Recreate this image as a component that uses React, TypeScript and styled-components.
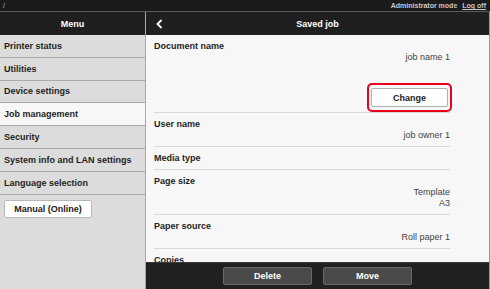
import * as React from 'react'
import styled, { createGlobalStyle } from 'styled-components'

const GlobalStyle = createGlobalStyle`
  html, body {
    margin: 0;
    padding: 0;
    overflow: hidden;
    background: #f7f7f7;
  }
  body {
    font-family: 'Liberation Sans', Arial, sans-serif;
  }
`

const Page = styled.div`
  width: 490px;
  height: 289px;
  display: flex;
  flex-direction: column;
  overflow: hidden;
`

const TopBar = styled.div`
  height: 11px;
  flex: 0 0 11px;
  background: #1b1b1b;
  border-bottom: 1px solid #5a5a5a;
  display: flex;
  align-items: center;
  justify-content: space-between;
  padding: 0 4px 0 3px;
  font-size: 7px;
  font-weight: bold;
  color: #c8c8c8;
`

const Slash = styled.span`
  font-weight: normal;
  color: #bbb;
`

const TopLinks = styled.div`
  display: flex;
  gap: 5px;
`

const LogOff = styled.span`
  text-decoration: underline;
`

const Main = styled.div`
  flex: 1;
  display: flex;
  min-height: 0;
`

const Sidebar = styled.div`
  width: 145px;
  flex: 0 0 145px;
  background: #dcdcdc;
  border-right: 1px solid #a8a8a8;
  display: flex;
  flex-direction: column;
`

const BarHeader = styled.div`
  height: 23px;
  flex: 0 0 23px;
  background: #1f1f1f;
  color: #fff;
  font-size: 9px;
  font-weight: bold;
  display: flex;
  align-items: center;
  justify-content: center;
`

const MenuItem = styled.div<{ $active?: boolean }>`
  height: 21.8px;
  border-bottom: 1px solid #a9a9a9;
  background: ${p => (p.$active ? '#f7f7f7' : '#dcdcdc')};
  display: flex;
  align-items: center;
  padding-left: 4px;
  font-size: 9px;
  font-weight: bold;
  color: #1e1e1e;
`

const ManualButton = styled.div`
  margin: 5px 0 0 4px;
  width: 86px;
  height: 16px;
  background: #fff;
  border: 1px solid #b8b8b8;
  border-radius: 2px;
  display: flex;
  align-items: center;
  justify-content: center;
  font-size: 9px;
  font-weight: bold;
  color: #222;
`

const Pane = styled.div`
  flex: 1;
  display: flex;
  flex-direction: column;
  min-width: 0;
  border-right: 1px solid #9a9a9a;
`

const PaneHeader = styled(BarHeader)`
  display: grid;
  grid-template-columns: 1fr auto 1fr;
  padding: 0 10px;
`

const Back = styled.div`
  display: flex;
  align-items: center;
`

const Content = styled.div`
  flex: 1;
  overflow: hidden;
  background: #f7f7f7;
  padding: 0 39px 0 8px;
`

const Field = styled.div`
  padding: 5px 0 5px;
  border-bottom: 1px solid #d9d9d9;
  display: flex;
  flex-direction: column;
`

const Label = styled.div`
  font-size: 9px;
  line-height: 12px;
  font-weight: bold;
  color: #1e1e1e;
`

const Value = styled.div`
  font-size: 9px;
  line-height: 11px;
  color: #444;
  text-align: right;
`

const ChangeRow = styled.div`
  display: flex;
  justify-content: flex-end;
  margin: 20px -2px -5px 0;
`

const Highlight = styled.div`
  border: 2px solid #e8001c;
  border-radius: 5px;
  padding: 3px 2px 3px 2px;
`

const ChangeButton = styled.div`
  width: 75px;
  height: 17px;
  background: #fff;
  border: 1px solid #b0b0b0;
  border-radius: 2px;
  display: flex;
  align-items: center;
  justify-content: center;
  font-size: 9px;
  font-weight: bold;
  color: #222;
`

const BottomBar = styled.div`
  height: 26px;
  flex: 0 0 26px;
  background: #202020;
  border-top: 1px solid #3a3a3a;
  display: flex;
  align-items: center;
  justify-content: center;
  gap: 11px;
`

const DarkButton = styled.div`
  width: 87px;
  height: 16px;
  background: #4a4a4a;
  border: 1px solid #6a6a6a;
  border-radius: 2px;
  display: flex;
  align-items: center;
  justify-content: center;
  font-size: 9px;
  font-weight: bold;
  color: #fff;
`

const menu = [
  'Printer status',
  'Utilities',
  'Device settings',
  'Job management',
  'Security',
  'System info and LAN settings',
  'Language selection',
]

const fields: { label: string; values: string[] }[] = [
  { label: 'User name', values: ['job owner 1'] },
  { label: 'Media type', values: [] },
  { label: 'Page size', values: ['Template', 'A3'] },
  { label: 'Paper source', values: ['Roll paper 1'] },
  { label: 'Copies', values: [] },
]

export default function App() {
  return (
    <Page>
      <GlobalStyle />
      <TopBar>
        <Slash>/</Slash>
        <TopLinks>
          <span>Administrator mode</span>
          <LogOff>Log off</LogOff>
        </TopLinks>
      </TopBar>
      <Main>
        <Sidebar>
          <BarHeader>Menu</BarHeader>
          {menu.map(m => (
            <MenuItem key={m} $active={m === 'Job management'}>{m}</MenuItem>
          ))}
          <ManualButton>Manual (Online)</ManualButton>
        </Sidebar>
        <Pane>
          <PaneHeader>
            <Back>
              <svg width="7" height="10" viewBox="0 0 7 10">
                <polyline points="5.5,1 1.5,5 5.5,9" fill="none" stroke="#fff" strokeWidth="1.8" />
              </svg>
            </Back>
            <span>Saved job</span>
            <span />
          </PaneHeader>
          <Content>
            <Field>
              <Label>Document name</Label>
              <Value>job name 1</Value>
              <ChangeRow>
                <Highlight>
                  <ChangeButton>Change</ChangeButton>
                </Highlight>
              </ChangeRow>
            </Field>
            {fields.map(f => (
              <Field key={f.label}>
                <Label>{f.label}</Label>
                {f.values.map(v => (
                  <Value key={v}>{v}</Value>
                ))}
              </Field>
            ))}
          </Content>
          <BottomBar>
            <DarkButton>Delete</DarkButton>
            <DarkButton>Move</DarkButton>
          </BottomBar>
        </Pane>
      </Main>
    </Page>
  )
}
